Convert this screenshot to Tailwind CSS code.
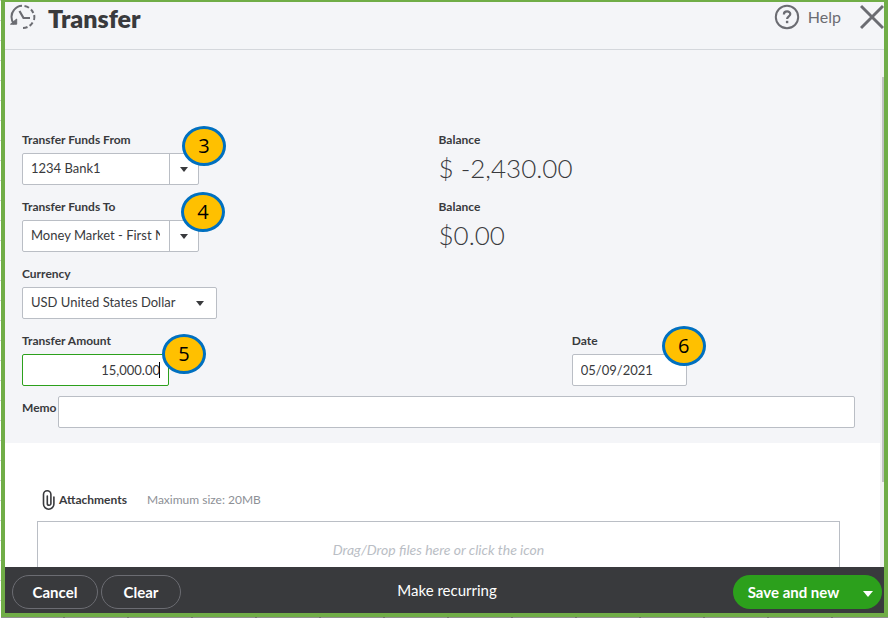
<!DOCTYPE html>
<html lang="en">
<head>
  <meta charset="UTF-8" />
  <meta name="viewport" content="width=device-width, initial-scale=1.0"/>
  <title>Transfer</title>
  <script src="https://cdn.jsdelivr.net/npm/@tailwindcss/browser@4"></script>
</head>
<body class="h-screen overflow-hidden font-['Lato',sans-serif] text-[#393a3d] bg-[repeating-linear-gradient(#d4d4d4_0_1px,#fff_1px_20px)]">

  <div class="flex h-full flex-col pl-px">
    <div class="flex min-h-0 flex-1 flex-col border-4 border-t-2 border-[#70ad47] bg-[#f4f5f8]">

      <header class="flex h-12 shrink-0 items-start justify-between border-b border-[#d4d7dc] pl-1">
        <div class="flex items-center gap-[11px]">
          <svg class="h-8 w-7" viewBox="0 0 28 32" fill="none" stroke="#6b6c72" stroke-width="2">
            <path d="M5 22C1.500 18 1.800 11.500 5 8c2-2.600 5-4.200 8-4.300"/>
            <path d="M1.500 22.200h6.200v-5.200z" fill="#6b6c72" stroke-width="1"/>
            <path d="M15.500 4a11 11 0 0 1 4.500 1.800M22 7.500a11 11 0 0 1 2.300 3.500M25.200 13a11 11 0 0 1-.2 5M23.600 20.500a11 11 0 0 1-3 3.400M18.500 25a11 11 0 0 1-4.500 1"/>
            <path d="M10.500 9l4 7h6.500" stroke-width="2.200"/>
          </svg>
          <h1 class="text-[25px] leading-8 font-extrabold">Transfer</h1>
        </div>
        <div class="flex items-center text-[#6b6c72]">
          <a href="#help" class="flex items-center gap-2 text-[16px] leading-[30px]">
            <svg class="h-[26px] w-[26px]" viewBox="0 0 26 26" fill="none" stroke="currentColor" stroke-width="2">
              <circle cx="13" cy="13" r="11.200"/>
              <path d="M9.900 10.400c0-4 6.400-3.800 6.400-.4 0 2.300-3.200 2.300-3.200 5" stroke-width="2.200"/>
              <path d="M13.100 16.800v2.400" stroke-width="2.400"/>
            </svg>
            Help
          </a>
          <button type="button" aria-label="Close" class="ml-[19px]">
            <svg class="h-[30px] w-6" viewBox="0 0 24 30" fill="none" stroke="currentColor" stroke-width="3">
              <path d="M1 4l22 22M23 4L1 26"/>
            </svg>
          </button>
        </div>
      </header>

      <main class="flex min-h-0 flex-1 overflow-hidden">
        <div class="min-w-0 flex-1 bg-white">
          <form class="bg-[#f4f5f8] pt-[82px] pr-[25px] pb-[15px] pl-[17px] text-[12px]">
            <div class="flex flex-col gap-[14px]">
              <div class="grid grid-cols-2">
                <div>
                  <label for="from" class="mb-[5px] block leading-4 font-bold">Transfer Funds From</label>
                  <div class="relative w-[177px]">
                    <select id="from" class="h-8 w-full appearance-none rounded-xs border border-[#babec5] bg-white pr-[38px] pl-2 text-[13px]">
                      <option>1234 Bank1</option>
                    </select>
                    <span class="pointer-events-none absolute inset-y-0 right-0 flex w-[30px] items-center border-l border-[#babec5] pl-[10px]">
                      <svg class="h-[5px] w-2" viewBox="0 0 8 5" fill="#393a3d"><path d="M0 0h8L4 5z"/></svg>
                    </span>
                    <span class="absolute -top-[27px] -right-[27px] flex h-10 w-11 items-center justify-center rounded-[50%] border-3 border-[#0070c0] bg-[#ffc000] font-['Open_Sans',sans-serif] text-[20px] text-black">3</span>
                  </div>
                </div>
                <div>
                  <p class="mb-1 leading-4 font-bold">Balance</p>
                  <p class="text-[26px] leading-8 font-light">$ -2,430.00</p>
                </div>
              </div>

              <div class="grid grid-cols-2">
                <div>
                  <label for="to" class="mb-[5px] block leading-4 font-bold">Transfer Funds To</label>
                  <div class="relative w-[177px]">
                    <select id="to" class="h-8 w-full appearance-none rounded-xs border border-[#babec5] bg-white pr-[38px] pl-2 text-[13px]">
                      <option>Money Market - First N</option>
                    </select>
                    <span class="pointer-events-none absolute inset-y-0 right-0 flex w-[30px] items-center border-l border-[#babec5] pl-[10px]">
                      <svg class="h-[5px] w-2" viewBox="0 0 8 5" fill="#393a3d"><path d="M0 0h8L4 5z"/></svg>
                    </span>
                    <span class="absolute -top-7 -right-[26px] flex h-10 w-11 items-center justify-center rounded-[50%] border-3 border-[#0070c0] bg-[#ffc000] font-['Open_Sans',sans-serif] text-[20px] text-black">4</span>
                  </div>
                </div>
                <div>
                  <p class="mb-1 leading-4 font-bold">Balance</p>
                  <p class="text-[26px] leading-8 font-light">$0.00</p>
                </div>
              </div>

              <div>
                <label for="currency" class="mb-[5px] block leading-4 font-bold">Currency</label>
                <div class="relative w-[195px]">
                  <select id="currency" class="h-8 w-full appearance-none rounded-xs border border-[#babec5] bg-white pr-6 pl-2 text-[13px]">
                    <option>USD United States Dollar</option>
                  </select>
                  <span class="pointer-events-none absolute inset-y-0 right-[13px] flex items-center">
                    <svg class="h-[5px] w-2" viewBox="0 0 8 5" fill="#393a3d"><path d="M0 0h8L4 5z"/></svg>
                  </span>
                </div>
              </div>

              <div class="grid grid-cols-[66%_1fr]">
                <div>
                  <label for="amount" class="mb-[5px] block leading-4 font-bold">Transfer Amount</label>
                  <div class="relative w-[147px]">
                    <input id="amount" type="text" value="15,000.00" class="h-8 w-full rounded-xs border border-[#2ca01c] bg-white px-2 text-right text-[13px]" />
                    <span class="absolute top-2 right-[9px] h-4 w-px bg-black"></span>
                    <span class="absolute -top-5 -right-[37px] flex h-10 w-11 items-center justify-center rounded-[50%] border-3 border-[#0070c0] bg-[#ffc000] font-['Open_Sans',sans-serif] text-[20px] text-black">5</span>
                  </div>
                </div>
                <div>
                  <label for="date" class="mb-[5px] block leading-4 font-bold">Date</label>
                  <div class="relative w-[115px]">
                    <input id="date" type="text" value="05/09/2021" class="h-8 w-full rounded-xs border border-[#babec5] bg-white px-2 text-[13px]" />
                    <span class="absolute -top-7 -right-[19px] flex h-10 w-11 items-center justify-center rounded-[50%] border-3 border-[#0070c0] bg-[#ffc000] font-['Open_Sans',sans-serif] text-[20px] text-black">6</span>
                  </div>
                </div>
              </div>
            </div>

            <div class="mt-[10px] flex">
              <label for="memo" class="w-9 shrink-0 pt-1 leading-4 font-bold">Memo</label>
              <input id="memo" type="text" class="h-8 min-w-0 flex-1 rounded-xs border border-[#babec5] bg-white px-2 text-[13px]" />
            </div>
          </form>

          <section class="pt-[45px] pr-10 pl-8 text-[12px]">
            <div class="flex items-center pl-[5px] leading-6">
              <svg class="h-5 w-[14px]" viewBox="0 0 14 20" fill="none" stroke="#393a3d" stroke-width="1.600" stroke-linecap="round">
                <path d="M5.300 6v7.500a1.800 1.800 0 0 0 3.600 0V4.500a3.700 3.700 0 0 0-7.400 0V14a5.200 5.200 0 0 0 10.400 0V7"/>
              </svg>
              <span class="ml-[3px] font-bold">Attachments</span>
              <span class="ml-5 text-[#8d9096]">Maximum size: 20MB</span>
            </div>
            <button type="button" class="mt-[9px] block h-[58px] w-full border border-[#babec5] pb-[2px] text-[14px] text-[#babec5] italic">Drag/Drop files here or click the icon</button>
          </section>
        </div>
        <div class="flex w-1 shrink-0 flex-col items-end bg-[#f1f1f1] pt-[27px]">
          <div class="h-[405px] w-[2px] bg-[#c1c1c1]"></div>
        </div>
      </main>

      <footer class="grid shrink-0 grid-cols-[1fr_auto_1fr] items-center bg-[#393a3d] pt-2 pr-[2px] pb-1 pl-[7px] text-[15px] text-white">
        <div class="flex gap-[3px] font-bold">
          <button type="button" class="h-[34px] w-[86px] rounded-full border border-[#6b6c72]">Cancel</button>
          <button type="button" class="h-[34px] w-20 rounded-full border border-[#6b6c72]">Clear</button>
        </div>
        <a href="#recurring" class="pb-1">Make recurring</a>
        <div class="flex justify-end font-bold">
          <button type="button" class="h-[34px] w-[121px] rounded-l-full bg-[#2ca01c]">Save and new</button>
          <button type="button" aria-label="More save options" class="flex h-[34px] w-7 items-center justify-center rounded-r-full bg-[#2ca01c]">
            <svg class="mt-1 h-[6px] w-[10px]" viewBox="0 0 10 6" fill="currentColor"><path d="M0 0h10L5 6z"/></svg>
          </button>
        </div>
      </footer>
    </div>
    <div class="h-px shrink-0 bg-[repeating-linear-gradient(90deg,#8f8f8f_0_62px,#6f6f6f_62px_64px)]"></div>
  </div>

</body>
</html>
